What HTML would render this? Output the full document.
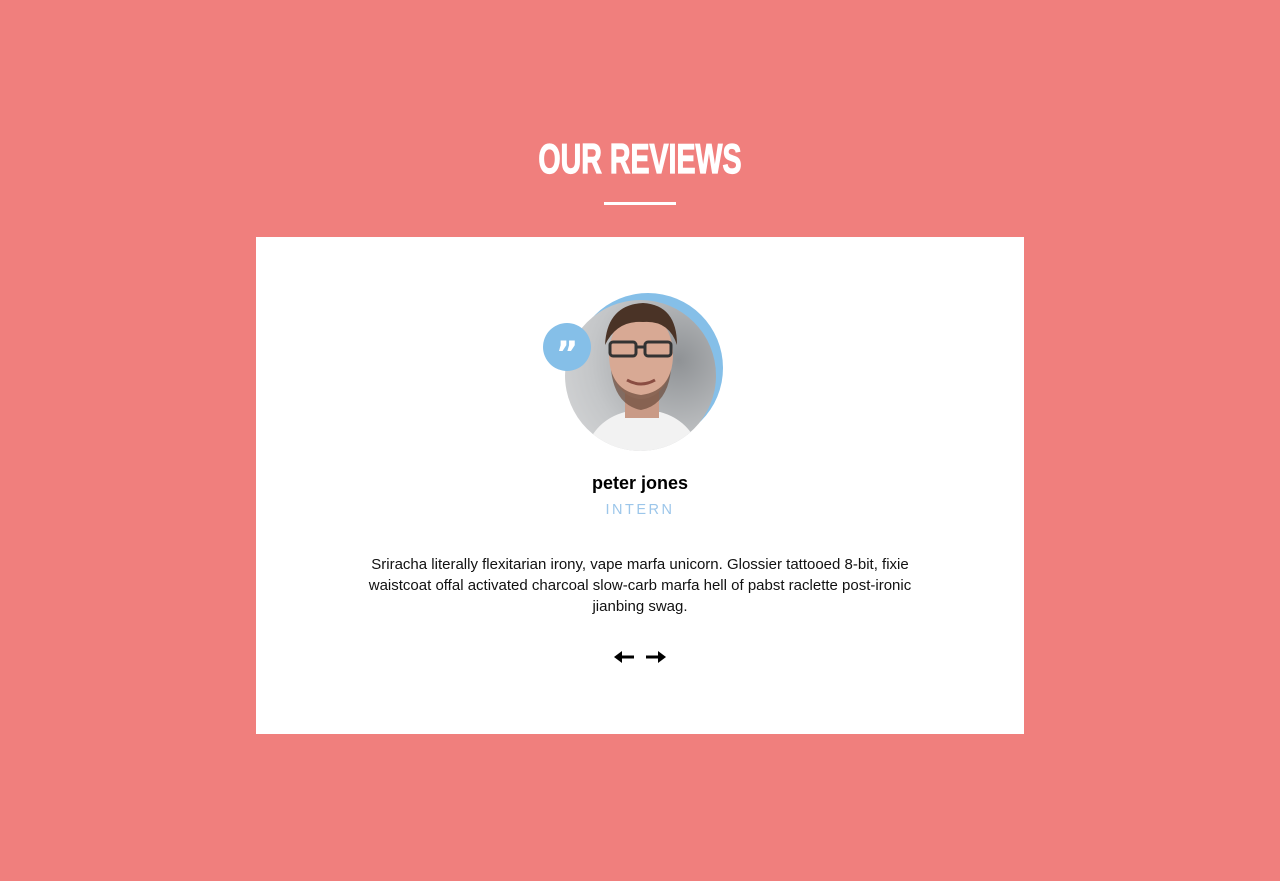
<!DOCTYPE html>
<html><head><meta charset="utf-8"><style>
body{margin:0;background:#f07f7d;width:1280px;height:881px;overflow:hidden;font-family:"Liberation Sans",sans-serif;}
h1{position:absolute;top:136px;left:0;width:1280px;text-align:center;margin:0;color:#fff;font-family:"Liberation Sans",sans-serif;font-weight:bold;font-size:42px;transform:scaleX(0.68);line-height:46px;-webkit-text-stroke:1.2px #fff;}
.bar{position:absolute;left:604px;top:202px;width:72px;height:3px;background:#fff;}
.card{position:absolute;left:256px;top:237px;width:768px;height:497px;background:#fff;}
.blue{position:absolute;left:573px;top:293px;width:150px;height:150px;border-radius:50%;background:#85bfe8;}
.photo{position:absolute;left:565px;top:300px;width:151px;height:151px;border-radius:50%;overflow:hidden;background:radial-gradient(circle at 75% 40%,#8f9295,#c4c6c8 60%,#d8d9da);}
.q{position:absolute;left:543px;top:323px;width:48px;height:48px;border-radius:50%;background:#85bfe8;color:#fff;font:bold 34px "DejaVu Sans",sans-serif;text-align:center;line-height:62px;}
.name{position:absolute;top:473px;width:1280px;left:0;text-align:center;font-weight:bold;font-size:18px;color:#000;}
.role{position:absolute;top:502px;width:1280px;left:0;text-align:center;font-size:14.5px;letter-spacing:2.5px;color:#9cc6ea;}
.txt{position:absolute;top:554px;left:346px;width:588px;text-align:center;font-size:15px;line-height:21px;color:#111;}
.arr{position:absolute;top:646px;left:613px;}
</style></head><body>
<h1>OUR REVIEWS</h1>
<div class="bar"></div>
<div class="card"></div>
<div class="blue"></div>
<div class="photo">
<svg width="151" height="151" viewBox="0 0 151 151">
<path d="M20 151 Q30 120 60 112 L95 112 Q125 120 135 151Z" fill="#f2f2f2"/>
<rect x="60" y="88" width="34" height="30" fill="#c99a86"/>
<ellipse cx="76" cy="55" rx="32" ry="44" fill="#d8a994"/>
<path d="M46 70 Q50 105 76 110 Q102 105 106 70 Q100 92 76 95 Q52 92 46 70Z" fill="#6b4a3a" opacity="0.7"/>
<path d="M40 45 Q42 5 78 3 Q112 5 112 45 Q104 20 78 22 Q52 20 40 45Z" fill="#4a3326"/>
<rect x="45" y="42" width="26" height="14" rx="3" fill="none" stroke="#333" stroke-width="3"/>
<rect x="80" y="42" width="26" height="14" rx="3" fill="none" stroke="#333" stroke-width="3"/>
<path d="M71 47 L80 47" stroke="#333" stroke-width="3"/>
<path d="M62 80 Q76 88 90 80" stroke="#8a4d42" stroke-width="3" fill="none"/>
</svg>
</div>
<div class="q">&#8221;</div>
<div class="name">peter jones</div>
<div class="role">INTERN</div>
<div class="txt">Sriracha literally flexitarian irony, vape marfa unicorn. Glossier tattooed 8-bit, fixie waistcoat offal activated charcoal slow-carb marfa hell of pabst raclette post-ironic jianbing swag.</div>
<svg class="arr" width="54" height="22" viewBox="0 0 54 22">
<path d="M7 11 H21" stroke="#000" stroke-width="3"/><path d="M1 11 L9 5 L9 17Z" fill="#000"/>
<path d="M33 11 H47" stroke="#000" stroke-width="3"/><path d="M53 11 L45 5 L45 17Z" fill="#000"/>
</svg>
</body></html>
